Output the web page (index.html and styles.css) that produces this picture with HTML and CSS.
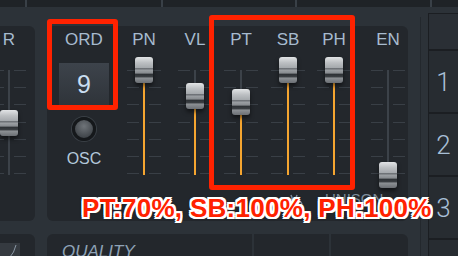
FILE: index.html
```html
<!DOCTYPE html>
<html lang="en">
<head>
    <meta charset="UTF-8">
    <meta name="viewport" content="width=device-width, initial-scale=1.0">
    <title>Oscillator Mixer</title>
    <link rel="stylesheet" href="styles.css">
</head>
<body>
    <div class="app">
        <div class="topbar">
            <span class="cell c1"></span>
            <span class="cell c2"></span>
            <span class="cell c3"></span>
            <span class="cell c4"></span>
            <span class="cell c5"></span>
        </div>

        <div class="workspace">
            <div class="rack">
                <div class="row row-top">
                    <section class="panel side">
                        <div class="col col-r">
                            <div class="label">R</div>
                            <div class="fader plain" style="--v: 0.5">
                                <div class="track"></div>
                                <div class="knob"></div>
                            </div>
                        </div>
                    </section>

                    <section class="panel mixer">
                        <div class="col col-ord">
                            <div class="label">ORD</div>
                            <div class="display">9</div>
                            <div class="osc-btn"></div>
                            <div class="osc-label">OSC</div>
                        </div>
                        <div class="col">
                            <div class="label">PN</div>
                            <div class="fader" style="--v: 1">
                                <div class="track"></div><div class="fill"></div><div class="knob"></div>
                            </div>
                        </div>
                        <div class="col">
                            <div class="label">VL</div>
                            <div class="fader" style="--v: 0.75">
                                <div class="track"></div><div class="fill"></div><div class="knob"></div>
                            </div>
                        </div>
                        <div class="col">
                            <div class="label">PT</div>
                            <div class="fader" style="--v: 0.7">
                                <div class="track"></div><div class="fill"></div><div class="knob"></div>
                            </div>
                        </div>
                        <div class="col">
                            <div class="label">SB</div>
                            <div class="fader" style="--v: 1">
                                <div class="track"></div><div class="fill"></div><div class="knob"></div>
                            </div>
                        </div>
                        <div class="col">
                            <div class="label">PH</div>
                            <div class="fader" style="--v: 1">
                                <div class="track"></div><div class="fill"></div><div class="knob"></div>
                            </div>
                        </div>
                        <div class="col col-en">
                            <div class="label">EN</div>
                            <div class="fader plain" style="--v: 0">
                                <div class="track"></div><div class="knob"></div>
                            </div>
                        </div>

                        <div class="unison">
                            <svg class="mini-knob" width="22" height="14" viewBox="0 0 22 14">
                                <path d="M3 13 A9 9 0 0 1 19 13" fill="none" stroke="#7d8c9b" stroke-width="1.5"/>
                                <path d="M8 4 L11 12 L14 4" fill="none" stroke="#7d8c9b" stroke-width="1.5"/>
                            </svg>
                            <span>UNISON</span>
                        </div>
                    </section>
                </div>

                <div class="row row-bottom">
                    <section class="panel side side-low">
                        <svg class="env" width="20" height="14" viewBox="0 0 20 14">
                            <rect width="20" height="14" fill="#353a40"/>
                            <path d="M10 14 Q14 10 16 2" fill="none" stroke="#8a97a4" stroke-width="1"/>
                        </svg>
                    </section>
                    <section class="panel quality">QUALITY</section>
                    <section class="panel slot"></section>
                    <section class="panel slot slot-end"></section>
                </div>
            </div>

            <aside class="patterns">
                <div class="pat head"></div>
                <div class="pat">1</div>
                <div class="pat">2</div>
                <div class="pat">3</div>
                <div class="pat last"></div>
            </aside>
        </div>

        <div class="mark mark-ord"></div>
        <div class="mark mark-mix"></div>
        <div class="caption">PT:70%, SB:100%, PH:100%</div>
    </div>
</body>
</html>
```

FILE: styles.css
```css
* { box-sizing: border-box; }

body {
    margin: 0;
    background: #2c3238;
    font-family: "Liberation Sans", Arial, sans-serif;
}

.app {
    position: relative;
    width: 458px;
    height: 256px;
    overflow: hidden;
    background: #2c3238;
}

/* top strip */
.topbar {
    display: flex;
    gap: 2px;
    height: 7px;
    background: #394047;
}
.topbar .cell { background: #1f2327; }
.c1 { width: 25px; }
.c2 { width: 134px; }
.c3 { width: 132px; }
.c4 { width: 133px; }
.c5 { flex: 1; }

.workspace {
    display: flex;
    height: 249px;
}

.rack {
    width: 421px;
    margin-top: 10px;
    padding-top: 9px;
    border-right: 1px solid #23282d;
}

.row { display: flex; }
.row-top { height: 195px; gap: 12px; }
.row-bottom { margin-top: 13px; height: 40px; gap: 2px; }

.panel {
    background: #23272c;
    border-radius: 6px;
}

.side {
    width: 35px;
    padding-top: 4px;
    border-top-left-radius: 0;
    border-bottom-left-radius: 0;
}
.side-low { margin-right: 10px; padding-top: 9px; }

.mixer {
    width: 361px;
    padding-top: 4px;
    display: grid;
    grid-template-columns: 74px 46px 56px 36px 58px 34px 57px;
    grid-template-rows: 159px auto;
}

.col {
    display: flex;
    flex-direction: column;
    align-items: center;
}
.col-r { width: 18px; }
.col-en { padding-left: 17px; }

.label {
    height: 20px;
    font-size: 17px;
    line-height: 20px;
    color: #a7bbcf;
}

/* ORD / OSC column */
.display {
    margin-top: 13px;
    width: 50px;
    height: 42px;
    background: linear-gradient(#3d434b, #2f343a);
    color: #cadef0;
    font-size: 25px;
    line-height: 42px;
    text-align: center;
}

.osc-btn {
    margin-top: 12px;
    width: 24px;
    height: 24px;
    border-radius: 50%;
    border: 3px solid #15181b;
    background: radial-gradient(circle at 50% 35%, #6f7479, #40454a 75%);
    box-shadow: 0 0 0 1px #3a4046;
}

.osc-label {
    margin-top: 8px;
    font-size: 16px;
    line-height: 20px;
    color: #b3c7da;
}

/* faders */
.fader {
    position: relative;
    width: 34px;
    height: 132px;
    margin-top: 7px;
    flex-shrink: 0;
}

.fader::before {
    content: "";
    position: absolute;
    left: 0;
    right: 0;
    top: 13px;
    height: 104px;
    background:
        repeating-linear-gradient(to bottom, #393f46 0 1px, transparent 1px 17.17px) left top / 12px 100% no-repeat,
        repeating-linear-gradient(to bottom, #393f46 0 1px, transparent 1px 17.17px) right top / 12px 100% no-repeat;
}

.track {
    position: absolute;
    left: 16px;
    top: 13px;
    width: 2px;
    height: 105px;
    background: #3c4249;
}

.fill {
    position: absolute;
    left: 16px;
    bottom: 14px;
    width: 2px;
    height: calc(105px * var(--v));
    background: #f5a530;
}

.knob {
    position: absolute;
    left: 8px;
    top: calc(105px * (1 - var(--v)));
    width: 18px;
    height: 26px;
    border-radius: 3px;
    background: linear-gradient(to bottom,
        #e2e4e6 0%, #bcbfc2 22%, #a4a8ac 42%, #5c6065 45%, #9ca0a4 50%,
        #878b8f 62%, #2d3135 66%, #3b3f43 76%, #8c9094 81%, #6b6f74 100%);
    box-shadow: 0 3px 4px rgba(0, 0, 0, 0.5);
}

.unison {
    grid-column: 5 / 8;
    display: flex;
    align-items: flex-start;
    gap: 20px;
    padding: 2px 0 0 24px;
    color: #7f8e9d;
    font-size: 15px;
    line-height: 16px;
}

/* bottom row */
.quality {
    width: 205px;
    padding: 8px 0 0 15px;
    font-size: 17px;
    line-height: 20px;
    font-style: italic;
    color: #8ea2b6;
    border-top-right-radius: 0;
}
.slot { width: 75px; border-radius: 0; }
.slot-end { width: 77px; border-top-right-radius: 6px; }

/* pattern list on the right */
.patterns {
    margin: 6px 0 0 7px;
    width: 30px;
    display: flex;
    flex-direction: column;
    gap: 2px;
    background: #1b1e22;
    border-left: 1px solid #1b1e22;
    border-top: 1px solid #1b1e22;
}

.pat {
    height: 61px;
    flex-shrink: 0;
    background: #272c31;
    color: #a8bfd6;
    font-family: Roboto, "Liberation Sans", sans-serif;
    font-weight: 300;
    font-size: 26px;
    display: flex;
    align-items: center;
    justify-content: center;
}
.pat.head { height: 35px; background: #2a2f35; }
.pat.last { flex: 1; }

/* annotations */
.mark {
    position: absolute;
    border: 5px solid #ff2200;
    border-radius: 3px;
}
.mark-ord { left: 47px; top: 19px; width: 71px; height: 91px; }
.mark-mix { left: 209px; top: 15px; width: 146px; height: 175px; }

.caption {
    position: absolute;
    left: 82px;
    top: 195px;
    font-size: 26px;
    line-height: 26px;
    letter-spacing: 0.3px;
    font-weight: bold;
    color: #ff2200;
    white-space: nowrap;
    text-shadow:
        2px 0 #fff, -2px 0 #fff, 0 2px #fff, 0 -2px #fff,
        2px 2px #fff, -2px 2px #fff, 2px -2px #fff, -2px -2px #fff,
        1px 2px #fff, -1px 2px #fff, 1px -2px #fff, -1px -2px #fff,
        0 0 4px rgba(0, 0, 0, 0.4);
}
```
